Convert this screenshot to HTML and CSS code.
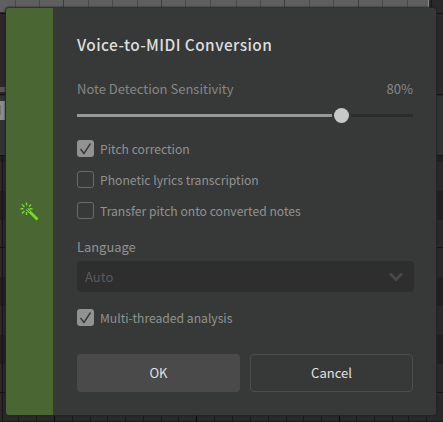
FILE: index.html
```html
<!DOCTYPE html>
<html lang="en">
<head>
<meta charset="utf-8">
<title>Voice-to-MIDI Conversion</title>
<link rel="stylesheet" href="styles.css">
</head>
<body>
<svg class="backdrop" width="443" height="422" shape-rendering="crispEdges" aria-hidden="true">
  <rect width="443" height="422" fill="#292929"/>
  <rect width="429" height="12" fill="#5f5f5f"/>
  <path d="M15.500 0V8M39.500 0V8M88.500 0V8M112.500 0V8M137.500 0V8M185.500 0V8M210.500 0V8M236.500 0V8M260.500 0V8M309.500 0V8M333.500 0V8M382.500 0V8M407.500 0V8" stroke="#4b4b4b"/>
  <path d="M63.500 0V8M161.500 0V8M284.500 0V8M358.500 0V8" stroke="#3b3b3b"/>
  <path d="M428.500 0V8" stroke="#888"/>
  <path d="M431.500 0V8" stroke="#191919"/>
  <rect y="87" width="6" height="5" fill="#555"/>
  <rect y="96" width="443" height="59" fill="#313434"/>
  <rect y="101" width="5" height="19" fill="#8b8b8b"/>
  <rect y="105" width="1" height="10" fill="#747474"/>
  <path d="M0 159H443M0 205.500H443M0 291.500H443M0 349.500H443" stroke="#202020" stroke-width="29"/>
  <rect y="130" width="443" height="25" fill="#313434"/>
  <rect y="162" width="443" height="29" fill="#292929"/>
  <path d="M0 13.500H443M0 94.500H443M0 155.500H443M0 247.500H443M0 392.500H443M2.500 156V422" stroke="#151515"/>
  <path d="M18.500 415V422M36.500 415V422M72.500 415V422M90.500 415V422M107.500 415V422M125.500 415V422M143.500 415V422M161.500 415V422M178.500 415V422M214.500 415V422M232.500 415V422M250.500 415V422M268.500 415V422M286.500 415V422M303.500 415V422M321.500 415V422M356.500 415V422M374.500 415V422M392.500 415V422M408.500 415V422M426.500 415V422M0 421.500H443" stroke="#191919"/>
  <path d="M54.500 415V422M196.500 415V422M339.500 415V422" stroke="#060606"/>
</svg>
<main class="dialog">
  <aside class="rail">
    <svg width="20" height="20" viewBox="0 0 20 20" fill="none" stroke="#72dd24">
      <path d="M7 7L17.500 17.500" stroke-width="2.800"/>
      <path d="M6.500 .5V3.500M6.500 10V13M.5 6.800H3.500M9.500 6.800H12.500M2 2.500L4.500 5M11 2.500L8.800 4.700M2 11.500L4.500 9" stroke-width="1.400"/>
      <path d="M6.500 6.500L10 10" stroke="#4a6632" stroke-width=".9"/>
    </svg>
  </aside>
  <section class="content">
    <h1>Voice-to-MIDI Conversion</h1>
    <div class="sensitivity"><span>Note Detection Sensitivity</span><span class="percent">80%</span></div>
    <div class="slider"><div class="fill"></div><div class="thumb"></div><div class="rest"></div></div>
    <div class="options">
      <div class="option"><span class="box checked"><svg viewBox="0 0 17 17"><path d="M3.500 9L7 13.500L13.500 3.500"/></svg></span><span>Pitch correction</span></div>
      <div class="option"><span class="box"></span><span>Phonetic lyrics transcription</span></div>
      <div class="option"><span class="box"></span><span>Transfer pitch onto converted notes</span></div>
    </div>
    <div class="language">Language</div>
    <div class="select"><span>Auto</span><svg width="16" height="12" viewBox="0 0 16 12"><path d="M2 2.500L8 8.500L14 2.500"/></svg></div>
    <div class="option multi"><span class="box checked"><svg viewBox="0 0 17 17"><path d="M3.500 9L7 13.500L13.500 3.500"/></svg></span><span>Multi-threaded analysis</span></div>
    <div class="buttons"><button class="ok">OK</button><button class="cancel">Cancel</button></div>
  </section>
</main>
</body>
</html>
```
FILE: styles.css
```css
* { box-sizing: border-box; }
body { margin: 0; height: 422px; overflow: hidden; background: #292929; padding: 8px 6px 0; font: 13px/20px "Noto Sans CJK SC", "Noto Sans", sans-serif; color: #929292; }
.backdrop { position: absolute; left: 0; top: 0; z-index: -1; }
.dialog { display: flex; width: 430px; height: 407px; background: #373938; border-radius: 3px; overflow: hidden; box-shadow: 0 0 2px 1px #242424; }
.rail { width: 47px; background: #4a6632; display: flex; align-items: center; justify-content: center; }
.content { width: 383px; padding: 24px 23px 0 24px; white-space: nowrap; }
h1 { margin: 0; font-size: 15.400px; line-height: 24px; font-weight: 500; color: #dedede; letter-spacing: .44px; }
.sensitivity { display: flex; justify-content: space-between; margin-top: 23px; height: 20px; color: #878787; }
.slider { display: flex; align-items: center; height: 16px; margin-top: 8px; }
.fill { width: 255px; height: 3px; background: #979997; }
.thumb { width: 15px; height: 15px; margin: 0 2px 0 1.500px; border-radius: 50%; background: #c8c8c8; }
.rest { flex: 1; height: 3px; background: #2b2c2b; }
.options { margin-top: 17px; display: grid; gap: 14px; }
.option { height: 17px; display: flex; align-items: center; gap: 6px; font-size: 12.150px; }
.box { width: 17px; height: 17px; border: 1px solid #696969; border-radius: 3px; }
.checked { background: #929292; border: 0; }
.box svg { display: block; fill: none; stroke: #373938; stroke-width: 1.4; }
.language { margin-top: 18px; height: 20px; font-size: 12.900px; }
.select { margin-top: 4px; height: 31px; width: 337px; border-radius: 4px; background: #2e2e2e; display: flex; align-items: center; justify-content: space-between; padding: 0 10px 0 8px; color: #5a5a5a; }
.select svg { fill: none; stroke: #484848; stroke-width: 3; }
.multi { margin-top: 17px; }
.buttons { display: flex; gap: 10px; margin-top: 28px; }
button { width: 163px; height: 38px; border: 0; border-radius: 4px; font: inherit; color: #e2e2e2; padding: 0; }
.ok { background: #494a49; }
.cancel { background: #373938; border: 1px solid #4c4d4c; }
```
